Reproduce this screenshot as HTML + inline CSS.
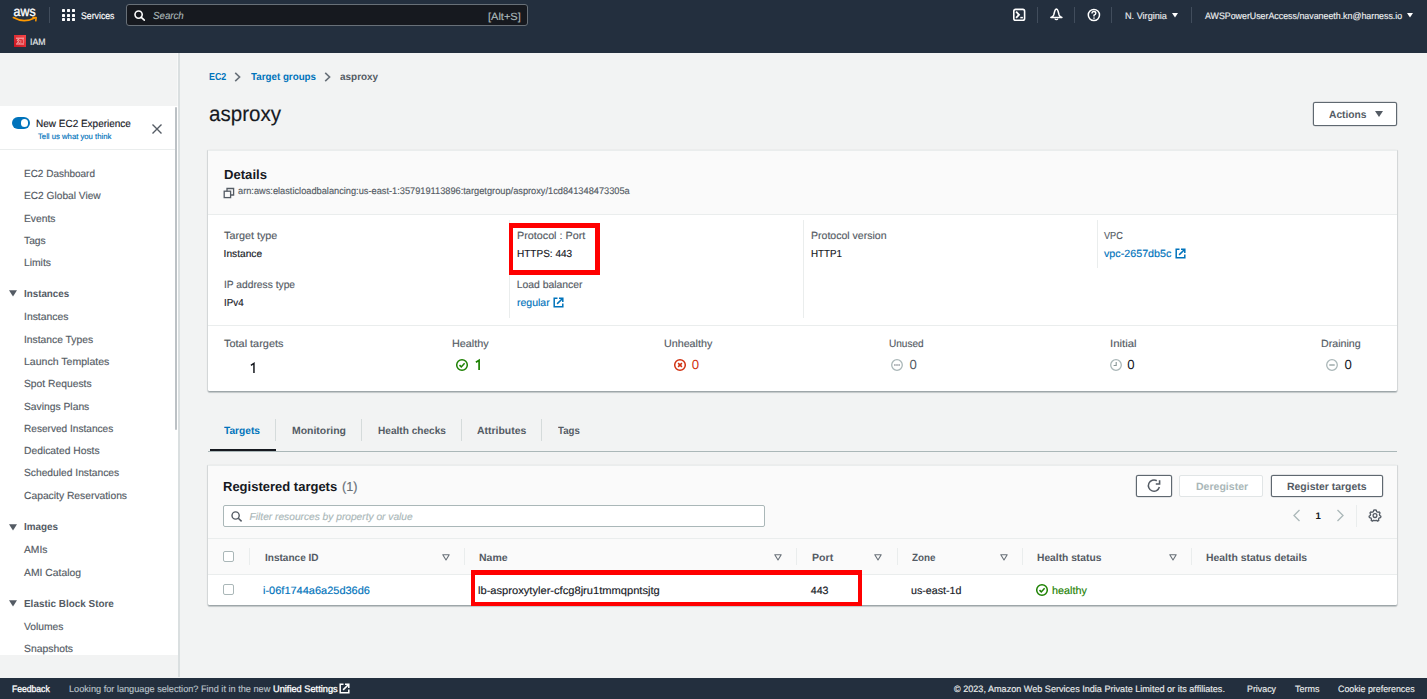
<!DOCTYPE html>
<html><head><meta charset="utf-8"><title>asproxy | EC2</title>
<style>
html,body{margin:0;padding:0;}
body{width:1427px;height:699px;position:relative;overflow:hidden;background:#f2f3f3;font-family:"Liberation Sans",sans-serif;text-rendering:geometricPrecision;}
.r{position:absolute;}
.t{position:absolute;line-height:1;white-space:nowrap;transform-origin:0 0;}
svg.r{overflow:visible;}
</style></head><body>
<div class="r" style="left:0px;top:0px;width:1427px;height:53px;background:#232f3e;"></div>
<svg class="r" style="left:12px;top:7px" width="27" height="17" viewBox="0 0 27 17">
<text x="1.6" y="8.8" font-family="Liberation Sans" font-size="13.6" fill="#fff" stroke="#fff" stroke-width="0.35" textLength="22" lengthAdjust="spacingAndGlyphs">aws</text>
<path d="M1.4 10.6 Q11.7 16.4 22.6 10.9" stroke="#ff9900" stroke-width="1.7" fill="none" stroke-linecap="round"/>
<path d="M21 10.5 L24.2 10.4 L23.8 13.8" stroke="#ff9900" stroke-width="1.5" fill="none" stroke-linecap="round" stroke-linejoin="round"/>
</svg>
<div class="r" style="left:49px;top:7px;width:1px;height:16px;background:#414d5c;"></div>
<div class="r" style="left:61.8px;top:8.8px;width:3.200000000000003px;height:3.0px;background:#fff;border-radius:0.4px;"></div>
<div class="r" style="left:66.7px;top:8.8px;width:3.200000000000003px;height:3.0px;background:#fff;border-radius:0.4px;"></div>
<div class="r" style="left:71.6px;top:8.8px;width:3.200000000000003px;height:3.0px;background:#fff;border-radius:0.4px;"></div>
<div class="r" style="left:61.8px;top:13.5px;width:3.200000000000003px;height:3.0px;background:#fff;border-radius:0.4px;"></div>
<div class="r" style="left:66.7px;top:13.5px;width:3.200000000000003px;height:3.0px;background:#fff;border-radius:0.4px;"></div>
<div class="r" style="left:71.6px;top:13.5px;width:3.200000000000003px;height:3.0px;background:#fff;border-radius:0.4px;"></div>
<div class="r" style="left:61.8px;top:18.200000000000003px;width:3.200000000000003px;height:3.0px;background:#fff;border-radius:0.4px;"></div>
<div class="r" style="left:66.7px;top:18.200000000000003px;width:3.200000000000003px;height:3.0px;background:#fff;border-radius:0.4px;"></div>
<div class="r" style="left:71.6px;top:18.200000000000003px;width:3.200000000000003px;height:3.0px;background:#fff;border-radius:0.4px;"></div>
<span class="t" style="left:80.50px;top:12px;font-size:9.6px;color:#fff;-webkit-text-stroke:0.15px #fff;transform:scaleX(0.9100);">Services</span>
<div class="r" style="left:126px;top:4px;width:402px;height:22px;background:#16191f;border:1px solid #687078;border-radius:3px;box-sizing:border-box;"></div>
<svg class="r" style="left:134px;top:10px" width="12" height="11" viewBox="0 0 12 11">
<circle cx="4.6" cy="4.6" r="3.6" stroke="#fff" stroke-width="1.6" fill="none"/><path d="M7.3 7.3 L10.3 10.2" stroke="#fff" stroke-width="1.6" stroke-linecap="round"/></svg>
<span class="t" style="left:153.00px;top:12px;font-size:10.2px;color:#aab7b8;-webkit-text-stroke:0.15px #aab7b8;font-style:italic;transform:scaleX(0.9530);">Search</span>
<span class="t" style="left:487.50px;top:13px;font-size:10.4px;color:#aab7b8;-webkit-text-stroke:0.15px #aab7b8;transform:scaleX(1.0606);">[Alt+S]</span>
<svg class="r" style="left:1012px;top:8px" width="14" height="14" viewBox="0 0 14 14">
<rect x="1.8" y="1.4" width="10.8" height="10.9" rx="1.8" stroke="#fff" stroke-width="1.6" fill="none"/>
<path d="M4.1 3.7 L7 6.8 L4.1 9.8" stroke="#fff" stroke-width="1.8" fill="none"/><path d="M8.3 9.6 H10.9" stroke="#fff" stroke-width="1.5"/></svg>
<div class="r" style="left:1037px;top:7px;width:1px;height:16px;background:#414d5c;"></div>
<svg class="r" style="left:1050px;top:8px" width="14" height="14" viewBox="0 0 14 14">
<path d="M6.4 1.1 Q5.3 1.2 4.7 3.3 L3.7 7 Q3.1 8.7 0.9 9.5 H11.9 Q9.7 8.7 9.1 7 L8.1 3.3 Q7.5 1.2 6.4 1.1 Z" stroke="#fff" stroke-width="1.5" fill="none" stroke-linejoin="round"/>
<path d="M5 10.6 A1.45 1.45 0 0 0 7.8 10.6" stroke="#fff" stroke-width="1.4" fill="none"/></svg>
<div class="r" style="left:1074px;top:7px;width:1px;height:16px;background:#414d5c;"></div>
<svg class="r" style="left:1087px;top:8px" width="14" height="14" viewBox="0 0 14 14">
<circle cx="6.9" cy="7" r="5.6" stroke="#fff" stroke-width="1.5" fill="none"/>
<path d="M5 5.4 Q5 3.5 6.9 3.5 Q8.8 3.5 8.8 5.2 Q8.8 6.4 7 7.2 V8.4" stroke="#fff" stroke-width="1.4" fill="none"/><rect x="6.3" y="9.4" width="1.4" height="1.4" fill="#fff"/></svg>
<div class="r" style="left:1111px;top:7px;width:1px;height:16px;background:#414d5c;"></div>
<span class="t" style="left:1124.70px;top:11px;font-size:9.4px;color:#e9ebed;-webkit-text-stroke:0.15px #e9ebed;transform:scaleX(0.9724);">N. Virginia</span>
<svg class="r" style="left:1172px;top:13px" width="6" height="5" viewBox="0 0 6 5"><path d="M0 0 H6 L3 4.6 Z" fill="#fff"/></svg>
<div class="r" style="left:1191px;top:7px;width:1px;height:16px;background:#414d5c;"></div>
<span class="t" style="left:1204.60px;top:11px;font-size:9.4px;color:#eef0f1;-webkit-text-stroke:0.15px #eef0f1;transform:scaleX(0.9422);">AWSPowerUserAccess/navaneeth.kn@harness.io</span>
<svg class="r" style="left:1407px;top:13px" width="6" height="5" viewBox="0 0 6 5"><path d="M0 0 H6 L3 4.6 Z" fill="#fff"/></svg>
<svg class="r" style="left:14px;top:35px" width="12" height="12" viewBox="0 0 12 12">
<defs><linearGradient id="ig" x1="0" y1="1" x2="1" y2="0"><stop offset="0" stop-color="#c7131f"/><stop offset="1" stop-color="#f54749"/></linearGradient></defs>
<rect width="12" height="12" fill="url(#ig)"/>
<path d="M2 3.2 H10 M2 9 H10" stroke="#f7c9c9" stroke-width="0.9"/>
<circle cx="4.3" cy="5.4" r="0.9" stroke="#fbe3e3" stroke-width="0.7" fill="none"/><path d="M2.9 8.2 Q4.3 6.2 5.7 8.2" stroke="#fbe3e3" stroke-width="0.7" fill="none"/>
<path d="M6.8 5 V8 M8.4 4.6 H9.6 V8" stroke="#f3b5b5" stroke-width="0.6" fill="none"/></svg>
<span class="t" style="left:29.50px;top:38px;font-size:9.2px;color:#e6e9ec;-webkit-text-stroke:0.15px #e6e9ec;transform:scaleX(0.9476);">IAM</span>
<div class="r" style="left:0px;top:53px;width:178px;height:624px;background:#f2f3f3;"></div>
<div class="r" style="left:177px;top:53px;width:1px;height:53px;background:#f8f8f8;"></div>
<div class="r" style="left:0px;top:106px;width:178px;height:549px;background:#ffffff;"></div>
<div class="r" style="left:175px;top:107px;width:2.3000000000000114px;height:323px;background:#bcc1c5;border-radius:1px;"></div>
<div class="r" style="left:178px;top:53px;width:2px;height:624px;background:#dadfe0;"></div>
<div class="r" style="left:12px;top:117px;width:18px;height:12px;background:#0073bb;border-radius:6px;"></div>
<div class="r" style="left:20.5px;top:119px;width:7.5px;height:7.5px;background:#fff;border-radius:50%;"></div>
<span class="t" style="left:36.00px;top:120px;font-size:10.4px;color:#16191f;-webkit-text-stroke:0.15px #16191f;transform:scaleX(0.9611);">New EC2 Experience</span>
<span class="t" style="left:38.20px;top:133px;font-size:7.8px;color:#0073bb;-webkit-text-stroke:0.15px #0073bb;transform:scaleX(0.9900);">Tell us what you think</span>
<svg class="r" style="left:151px;top:123px" width="12" height="12" viewBox="0 0 12 12"><path d="M1.5 1.5 L10.5 10.5 M10.5 1.5 L1.5 10.5" stroke="#545b64" stroke-width="1.4"/></svg>
<div class="r" style="left:0px;top:149px;width:175px;height:1px;background:#eaeded;"></div>
<span class="t" style="left:24.00px;top:170px;font-size:10.3px;color:#545b64;-webkit-text-stroke:0.15px #545b64;transform:scaleX(0.9688);">EC2 Dashboard</span>
<span class="t" style="left:24.00px;top:192px;font-size:10.3px;color:#545b64;-webkit-text-stroke:0.15px #545b64;transform:scaleX(0.9874);">EC2 Global View</span>
<span class="t" style="left:24.00px;top:215px;font-size:10.3px;color:#545b64;-webkit-text-stroke:0.15px #545b64;">Events</span>
<span class="t" style="left:24.00px;top:237px;font-size:10.3px;color:#545b64;-webkit-text-stroke:0.15px #545b64;">Tags</span>
<span class="t" style="left:24.00px;top:259px;font-size:10.3px;color:#545b64;-webkit-text-stroke:0.15px #545b64;">Limits</span>
<span class="t" style="left:24.00px;top:313px;font-size:10.3px;color:#545b64;-webkit-text-stroke:0.15px #545b64;transform:scaleX(1.0094);">Instances</span>
<span class="t" style="left:24.00px;top:336px;font-size:10.3px;color:#545b64;-webkit-text-stroke:0.15px #545b64;">Instance Types</span>
<span class="t" style="left:24.00px;top:358px;font-size:10.3px;color:#545b64;-webkit-text-stroke:0.15px #545b64;transform:scaleX(1.0238);">Launch Templates</span>
<span class="t" style="left:24.00px;top:380px;font-size:10.3px;color:#545b64;-webkit-text-stroke:0.15px #545b64;">Spot Requests</span>
<span class="t" style="left:24.00px;top:403px;font-size:10.3px;color:#545b64;-webkit-text-stroke:0.15px #545b64;">Savings Plans</span>
<span class="t" style="left:24.00px;top:425px;font-size:10.3px;color:#545b64;-webkit-text-stroke:0.15px #545b64;transform:scaleX(0.9810);">Reserved Instances</span>
<span class="t" style="left:24.00px;top:447px;font-size:10.3px;color:#545b64;-webkit-text-stroke:0.15px #545b64;">Dedicated Hosts</span>
<span class="t" style="left:24.00px;top:469px;font-size:10.3px;color:#545b64;-webkit-text-stroke:0.15px #545b64;transform:scaleX(0.9955);">Scheduled Instances</span>
<span class="t" style="left:24.00px;top:492px;font-size:10.3px;color:#545b64;-webkit-text-stroke:0.15px #545b64;">Capacity Reservations</span>
<span class="t" style="left:24.00px;top:546px;font-size:10.3px;color:#545b64;-webkit-text-stroke:0.15px #545b64;">AMIs</span>
<span class="t" style="left:24.00px;top:569px;font-size:10.3px;color:#545b64;-webkit-text-stroke:0.15px #545b64;transform:scaleX(1.0057);">AMI Catalog</span>
<span class="t" style="left:24.00px;top:623px;font-size:10.3px;color:#545b64;-webkit-text-stroke:0.15px #545b64;">Volumes</span>
<span class="t" style="left:24.00px;top:645px;font-size:10.3px;color:#545b64;-webkit-text-stroke:0.15px #545b64;transform:scaleX(1.0067);">Snapshots</span>
<svg class="r" style="left:9.4px;top:290px" width="8" height="7" viewBox="0 0 8 7"><path d="M0 0.2 H8 L4 6.6 Z" fill="#545b64"/></svg>
<span class="t" style="left:23.50px;top:290px;font-size:10.2px;color:#545b64;font-weight:700;transform:scaleX(0.9605);">Instances</span>
<svg class="r" style="left:9.4px;top:523.5px" width="8" height="7" viewBox="0 0 8 7"><path d="M0 0.2 H8 L4 6.6 Z" fill="#545b64"/></svg>
<span class="t" style="left:23.50px;top:523px;font-size:10.2px;color:#545b64;font-weight:700;transform:scaleX(0.9701);">Images</span>
<svg class="r" style="left:9.4px;top:600px" width="8" height="7" viewBox="0 0 8 7"><path d="M0 0.2 H8 L4 6.6 Z" fill="#545b64"/></svg>
<span class="t" style="left:23.50px;top:600px;font-size:10.2px;color:#545b64;font-weight:700;transform:scaleX(0.9740);">Elastic Block Store</span>
<div class="r" style="left:180px;top:53px;width:1247px;height:624px;background:#f2f3f3;"></div>
<span class="t" style="left:208.70px;top:73px;font-size:10.2px;color:#0073bb;font-weight:700;transform:scaleX(0.8718);">EC2</span>
<svg class="r" style="left:234px;top:71.6px" width="7" height="10" viewBox="0 0 7 10"><path d="M1.2 0.8 L5.6 5 L1.2 9.2" stroke="#687078" stroke-width="1.6" fill="none"/></svg>
<span class="t" style="left:250.50px;top:73px;font-size:10.2px;color:#0073bb;font-weight:700;transform:scaleX(0.9600);">Target groups</span>
<svg class="r" style="left:323.8px;top:71.6px" width="7" height="10" viewBox="0 0 7 10"><path d="M1.2 0.8 L5.6 5 L1.2 9.2" stroke="#687078" stroke-width="1.6" fill="none"/></svg>
<span class="t" style="left:339.50px;top:73px;font-size:10.2px;color:#545b64;font-weight:700;transform:scaleX(0.9764);">asproxy</span>
<span class="t" style="left:208.50px;top:104px;font-size:21.5px;color:#16191f;-webkit-text-stroke:0.15px #16191f;transform:scaleX(0.9564);">asproxy</span>
<div class="r" style="left:1313px;top:102px;width:84px;height:24px;background:#fff;border:1px solid #5f6870;border-radius:2px;box-sizing:border-box;box-shadow:0 0 0.5px 0.3px rgba(95,104,112,.6);"></div>
<span class="t" style="left:1329.00px;top:110px;font-size:10.5px;color:#545b64;font-weight:700;transform:scaleX(0.9739);">Actions</span>
<svg class="r" style="left:1375px;top:111px" width="8" height="6" viewBox="0 0 8 6"><path d="M0 0 H8 L4 6 Z" fill="#545b64"/></svg>
<div class="r" style="left:208px;top:150px;width:1189px;height:241px;background:#fff;box-shadow:0 1.5px 1px 0 rgba(0,28,36,.18),1px 0.5px 1px 0 rgba(0,28,36,.12),-1px 0.5px 1px 0 rgba(0,28,36,.12);border-top:1px solid #eaeded;box-sizing:border-box;border-radius:0 0 1.5px 1.5px;"></div>
<div class="r" style="left:208px;top:151px;width:1189px;height:63px;background:#fafafa;"></div>
<div class="r" style="left:208px;top:214px;width:1189px;height:1px;background:#eaeded;"></div>
<span class="t" style="left:223.60px;top:168px;font-size:13.2px;color:#16191f;font-weight:700;transform:scaleX(0.9934);">Details</span>
<svg class="r" style="left:223px;top:187px" width="12" height="12" viewBox="0 0 12 12">
<rect x="1.2" y="4.2" width="6.4" height="6.4" stroke="#545b64" stroke-width="1.3" fill="none"/>
<path d="M4 4.2 V1.5 H10.6 V8 H7.6" stroke="#545b64" stroke-width="1.3" fill="none"/></svg>
<span class="t" style="left:237.50px;top:187px;font-size:9.6px;color:#545b64;-webkit-text-stroke:0.15px #545b64;transform:scaleX(0.9630);">arn:aws:elasticloadbalancing:us-east-1:357919113896:targetgroup/asproxy/1cd841348473305a</span>
<div class="r" style="left:509px;top:219.5px;width:1px;height:98.5px;background:#eaeded;"></div>
<div class="r" style="left:802.5px;top:219.5px;width:1.0px;height:98.5px;background:#eaeded;"></div>
<div class="r" style="left:1096.5px;top:219.5px;width:1.0px;height:48.80000000000001px;background:#eaeded;"></div>
<span class="t" style="left:223.60px;top:232px;font-size:10.4px;color:#545b64;-webkit-text-stroke:0.15px #545b64;transform:scaleX(1.0379);">Target type</span>
<span class="t" style="left:223.60px;top:250px;font-size:10.2px;color:#16191f;-webkit-text-stroke:0.15px #16191f;">Instance</span>
<span class="t" style="left:223.60px;top:281px;font-size:10.4px;color:#545b64;-webkit-text-stroke:0.15px #545b64;transform:scaleX(0.9865);">IP address type</span>
<span class="t" style="left:223.60px;top:299px;font-size:10.2px;color:#16191f;-webkit-text-stroke:0.15px #16191f;transform:scaleX(0.9603);">IPv4</span>
<span class="t" style="left:516.70px;top:232px;font-size:10.4px;color:#545b64;-webkit-text-stroke:0.15px #545b64;transform:scaleX(1.0365);">Protocol : Port</span>
<span class="t" style="left:516.70px;top:250px;font-size:10.2px;color:#16191f;-webkit-text-stroke:0.15px #16191f;transform:scaleX(0.9836);">HTTPS: 443</span>
<span class="t" style="left:516.70px;top:281px;font-size:10.4px;color:#545b64;-webkit-text-stroke:0.15px #545b64;">Load balancer</span>
<span class="t" style="left:516.70px;top:299px;font-size:10.4px;color:#0073bb;-webkit-text-stroke:0.15px #0073bb;transform:scaleX(1.0100);">regular</span>
<svg class="r" style="left:553.4px;top:297.3px" width="11" height="11" viewBox="0 0 11 11">
<path d="M4.5 1.2 H1.2 V9.8 H9.8 V6.5" stroke="#0073bb" stroke-width="1.5" fill="none"/><path d="M6 1.2 H9.8 V5 M9.8 1.2 L4.1 6.9" stroke="#0073bb" stroke-width="1.5" fill="none"/></svg>
<span class="t" style="left:810.60px;top:232px;font-size:10.4px;color:#545b64;-webkit-text-stroke:0.15px #545b64;transform:scaleX(1.0138);">Protocol version</span>
<span class="t" style="left:810.60px;top:250px;font-size:10.2px;color:#16191f;-webkit-text-stroke:0.15px #16191f;transform:scaleX(0.9596);">HTTP1</span>
<span class="t" style="left:1104.00px;top:232px;font-size:10.2px;color:#545b64;-webkit-text-stroke:0.15px #545b64;transform:scaleX(0.8964);">VPC</span>
<span class="t" style="left:1104.00px;top:250px;font-size:10.4px;color:#0073bb;-webkit-text-stroke:0.15px #0073bb;transform:scaleX(1.0316);">vpc-2657db5c</span>
<svg class="r" style="left:1175.4px;top:247.6px" width="11" height="11" viewBox="0 0 11 11">
<path d="M4.5 1.2 H1.2 V9.8 H9.8 V6.5" stroke="#0073bb" stroke-width="1.5" fill="none"/><path d="M6 1.2 H9.8 V5 M9.8 1.2 L4.1 6.9" stroke="#0073bb" stroke-width="1.5" fill="none"/></svg>
<div class="r" style="left:509px;top:223px;width:91px;height:52px;border:5px solid #f00;border-left-width:4px;box-sizing:border-box;"></div>
<div class="r" style="left:208px;top:325px;width:1189px;height:1px;background:#eaeded;"></div>
<span class="t" style="left:223.50px;top:340px;font-size:10.4px;color:#545b64;-webkit-text-stroke:0.15px #545b64;transform:scaleX(1.0503);">Total targets</span>
<span class="t" style="left:452.30px;top:340px;font-size:10.4px;color:#545b64;-webkit-text-stroke:0.15px #545b64;transform:scaleX(1.0407);">Healthy</span>
<span class="t" style="left:664.20px;top:340px;font-size:10.4px;color:#545b64;-webkit-text-stroke:0.15px #545b64;transform:scaleX(1.0314);">Unhealthy</span>
<span class="t" style="left:888.70px;top:340px;font-size:10.4px;color:#545b64;-webkit-text-stroke:0.15px #545b64;transform:scaleX(0.9680);">Unused</span>
<span class="t" style="left:1110.20px;top:340px;font-size:10.4px;color:#545b64;-webkit-text-stroke:0.15px #545b64;transform:scaleX(1.0915);">Initial</span>
<span class="t" style="left:1321.40px;top:340px;font-size:10.4px;color:#545b64;-webkit-text-stroke:0.15px #545b64;transform:scaleX(1.0250);">Draining</span>
<svg class="r" style="left:0;top:0" width="1" height="1"><path d="M250.9 365.3 L253.95 363.3 V372.9" stroke="#16191f" stroke-width="1.5" fill="none"/></svg>
<svg class="r" style="left:456px;top:359.2px" width="12" height="12" viewBox="0 0 12 12"><circle cx="6" cy="6" r="5.3" stroke="#1d8102" stroke-width="1.5" fill="none"/><path d="M3.5 6.1 L5.3 7.9 L8.6 4.3" stroke="#1d8102" stroke-width="1.5" fill="none"/></svg>
<svg class="r" style="left:0;top:0" width="1" height="1"><path d="M475.9 362.3 L479.1 360.3 V369.9" stroke="#1d8102" stroke-width="1.7" fill="none"/></svg>
<svg class="r" style="left:673.6px;top:359.2px" width="12" height="12" viewBox="0 0 12 12"><circle cx="6" cy="6" r="5.3" stroke="#d13212" stroke-width="1.5" fill="none"/><path d="M4.1 4.1 L7.9 7.9 M7.9 4.1 L4.1 7.9" stroke="#d13212" stroke-width="1.5"/></svg>
<span class="t" style="left:691.80px;top:358px;font-size:13.2px;color:#d13212;">0</span>
<svg class="r" style="left:891.2px;top:358.7px" width="12" height="12" viewBox="0 0 12 12"><circle cx="6" cy="6" r="5.3" stroke="#aab7b8" stroke-width="1.3" fill="none"/><rect x="3.3" y="5.4" width="1.2" height="1.2" fill="#545b64"/><rect x="5.4" y="5.4" width="1.2" height="1.2" fill="#545b64"/><rect x="7.5" y="5.4" width="1.2" height="1.2" fill="#545b64"/></svg>
<span class="t" style="left:909.60px;top:358px;font-size:13.2px;color:#545b64;">0</span>
<svg class="r" style="left:1109.6px;top:358.7px" width="12" height="12" viewBox="0 0 12 12"><circle cx="6" cy="6" r="5.3" stroke="#aab7b8" stroke-width="1.3" fill="none"/><path d="M6.2 3.0 V6.5 H3.6" stroke="#879596" stroke-width="1.1" fill="none"/></svg>
<span class="t" style="left:1127.20px;top:358px;font-size:13.2px;color:#16191f;">0</span>
<svg class="r" style="left:1326.4px;top:358.7px" width="12" height="12" viewBox="0 0 12 12"><circle cx="6" cy="6" r="5.3" stroke="#aab7b8" stroke-width="1.3" fill="none"/><path d="M3.3 6 H8.7" stroke="#879596" stroke-width="1.2"/></svg>
<span class="t" style="left:1344.60px;top:358px;font-size:13.2px;color:#16191f;">0</span>
<span class="t" style="left:224.10px;top:427px;font-size:10.4px;color:#0073bb;font-weight:700;transform:scaleX(0.9783);">Targets</span>
<span class="t" style="left:291.80px;top:427px;font-size:10.4px;color:#545b64;font-weight:700;transform:scaleX(1.0053);">Monitoring</span>
<span class="t" style="left:377.70px;top:427px;font-size:10.4px;color:#545b64;font-weight:700;transform:scaleX(0.9721);">Health checks</span>
<span class="t" style="left:477.10px;top:427px;font-size:10.4px;color:#545b64;font-weight:700;transform:scaleX(1.0038);">Attributes</span>
<span class="t" style="left:558.00px;top:427px;font-size:10.4px;color:#545b64;font-weight:700;transform:scaleX(0.9276);">Tags</span>
<div class="r" style="left:275.2px;top:419px;width:1.0px;height:22px;background:#d5dbdb;"></div>
<div class="r" style="left:360.7px;top:419px;width:1.0px;height:22px;background:#d5dbdb;"></div>
<div class="r" style="left:460.5px;top:419px;width:1.0px;height:22px;background:#d5dbdb;"></div>
<div class="r" style="left:541.4px;top:419px;width:1.0px;height:22px;background:#d5dbdb;"></div>
<div class="r" style="left:208px;top:451px;width:1189px;height:1px;background:#aab7b8;"></div>
<div class="r" style="left:210px;top:449.2px;width:65.5px;height:2.1999999999999886px;background:#16191f;"></div>
<div class="r" style="left:208px;top:464.5px;width:1189px;height:140.5px;background:#fff;box-shadow:0 1.5px 1px 0 rgba(0,28,36,.18),1px 0.5px 1px 0 rgba(0,28,36,.12),-1px 0.5px 1px 0 rgba(0,28,36,.12);border-top:1px solid #eaeded;box-sizing:border-box;border-radius:0 0 1.5px 1.5px;"></div>
<div class="r" style="left:208px;top:465.5px;width:1189px;height:109.0px;background:#fafafa;"></div>
<div class="r" style="left:208px;top:538px;width:1189px;height:1px;background:#eaeded;"></div>
<div class="r" style="left:208px;top:574px;width:1189px;height:1px;background:#eaeded;"></div>
<span class="t" style="left:223.40px;top:480px;font-size:13.2px;color:#16191f;font-weight:700;transform:scaleX(0.9861);">Registered targets</span>
<span class="t" style="left:341.80px;top:480px;font-size:13px;color:#687078;-webkit-text-stroke:0.15px #687078;transform:scaleX(0.9755);">(1)</span>
<div class="r" style="left:223px;top:504.5px;width:542px;height:22.5px;background:#fff;border:1px solid #aab7b8;border-radius:2px;box-sizing:border-box;"></div>
<svg class="r" style="left:231px;top:510.5px" width="12" height="11" viewBox="0 0 12 11">
<circle cx="4.6" cy="4.5" r="3.6" stroke="#545b64" stroke-width="1.4" fill="none"/><path d="M7.3 7.2 L10.6 10.4" stroke="#545b64" stroke-width="1.5"/></svg>
<span class="t" style="left:249.60px;top:513px;font-size:10.2px;color:#aab7b8;-webkit-text-stroke:0.15px #aab7b8;font-style:italic;">Filter resources by property or value</span>
<div class="r" style="left:1136px;top:474.8px;width:36px;height:22.0px;background:#fff;border:1px solid #5f6870;border-radius:2px;box-sizing:border-box;box-shadow:0 0 0.5px 0.3px rgba(95,104,112,.6);"></div>
<svg class="r" style="left:1146px;top:478px" width="16" height="16" viewBox="0 0 16 16">
<path d="M13.4 9.05 A5.6 5.6 0 1 1 10.8 2.75" stroke="#545b64" stroke-width="1.5" fill="none"/><path d="M13.6 2.2 V6 H9.8" stroke="#545b64" stroke-width="1.6" fill="none"/></svg>
<div class="r" style="left:1179.3px;top:474.8px;width:83.90000000000009px;height:22.0px;background:#fff;border:1px solid #e1e5e6;border-radius:2px;box-sizing:border-box;"></div>
<span class="t" style="left:1195.50px;top:482px;font-size:10.5px;color:#aab7b8;font-weight:700;transform:scaleX(1.0030);">Deregister</span>
<div class="r" style="left:1270.7px;top:474.8px;width:111.89999999999986px;height:22.0px;background:#fff;border:1px solid #5f6870;border-radius:2px;box-sizing:border-box;box-shadow:0 0 0.5px 0.3px rgba(95,104,112,.6);"></div>
<span class="t" style="left:1286.80px;top:482px;font-size:10.5px;color:#545b64;font-weight:700;transform:scaleX(0.9944);">Register targets</span>
<svg class="r" style="left:1292px;top:508.7px" width="9" height="13" viewBox="0 0 9 13"><path d="M7.5 1 L2 6.5 L7.5 12" stroke="#aab7b8" stroke-width="1.3" fill="none"/></svg>
<span class="t" style="left:1315.60px;top:512px;font-size:9.6px;color:#16191f;font-weight:700;">1</span>
<svg class="r" style="left:1336.4px;top:508.7px" width="9" height="13" viewBox="0 0 9 13"><path d="M1.5 1 L7 6.5 L1.5 12" stroke="#aab7b8" stroke-width="1.3" fill="none"/></svg>
<div class="r" style="left:1356px;top:505px;width:1px;height:22px;background:#eaeded;"></div>
<svg class="r" style="left:1368px;top:508.6px" width="14" height="13" viewBox="0 0 14 13">
<path d="M7 0.9 L8.3 1.2 L8.6 2.6 L9.9 3.3 L11.2 2.8 L12 3.9 L11.4 5.2 L11.8 6.5 L12.9 7.3 L12.6 8.6 L11.2 8.9 L10.5 10.1 L10.8 11.4 L9.6 12.1 L8.5 11.3 L7 11.7 L5.5 11.3 L4.4 12.1 L3.2 11.4 L3.5 10.1 L2.8 8.9 L1.4 8.6 L1.1 7.3 L2.2 6.5 L2.6 5.2 L2 3.9 L2.8 2.8 L4.1 3.3 L5.4 2.6 L5.7 1.2 Z" stroke="#545b64" stroke-width="1.3" fill="none" stroke-linejoin="round"/>
<circle cx="7" cy="6.6" r="1.9" stroke="#545b64" stroke-width="1.3" fill="none"/></svg>
<div class="r" style="left:222.9px;top:550.8px;width:11.0px;height:11.0px;background:#fff;border:1px solid #aab7b8;border-radius:2px;box-sizing:border-box;"></div>
<div class="r" style="left:222.9px;top:584.2px;width:11.0px;height:11.0px;background:#fff;border:1px solid #aab7b8;border-radius:2px;box-sizing:border-box;"></div>
<div class="r" style="left:248.7px;top:547.6px;width:1.0px;height:17.899999999999977px;background:#eaeded;"></div>
<div class="r" style="left:463.6px;top:547.6px;width:1.0px;height:17.899999999999977px;background:#eaeded;"></div>
<div class="r" style="left:796.4px;top:547.6px;width:1.0px;height:17.899999999999977px;background:#eaeded;"></div>
<div class="r" style="left:896.6px;top:547.6px;width:1.0px;height:17.899999999999977px;background:#eaeded;"></div>
<div class="r" style="left:1021.5px;top:547.6px;width:1.0px;height:17.899999999999977px;background:#eaeded;"></div>
<div class="r" style="left:1190.5px;top:547.6px;width:1.0px;height:17.899999999999977px;background:#eaeded;"></div>
<span class="t" style="left:264.50px;top:554px;font-size:10.4px;color:#545b64;font-weight:700;transform:scaleX(0.9660);">Instance ID</span>
<span class="t" style="left:479.30px;top:554px;font-size:10.4px;color:#545b64;font-weight:700;transform:scaleX(1.0097);">Name</span>
<span class="t" style="left:811.70px;top:554px;font-size:10.4px;color:#545b64;font-weight:700;transform:scaleX(1.0192);">Port</span>
<span class="t" style="left:911.70px;top:554px;font-size:10.4px;color:#545b64;font-weight:700;transform:scaleX(0.9459);">Zone</span>
<span class="t" style="left:1037.30px;top:554px;font-size:10.4px;color:#545b64;font-weight:700;transform:scaleX(0.9861);">Health status</span>
<span class="t" style="left:1206.00px;top:554px;font-size:10.4px;color:#545b64;font-weight:700;">Health status details</span>
<svg class="r" style="left:442.1px;top:553.5px" width="8" height="7" viewBox="0 0 8 7"><path d="M0.8 0.8 H7.2 L4 6 Z" stroke="#687078" stroke-width="1.1" fill="none" stroke-linejoin="round"/></svg>
<svg class="r" style="left:774.3px;top:553.5px" width="8" height="7" viewBox="0 0 8 7"><path d="M0.8 0.8 H7.2 L4 6 Z" stroke="#687078" stroke-width="1.1" fill="none" stroke-linejoin="round"/></svg>
<svg class="r" style="left:873.9px;top:553.5px" width="8" height="7" viewBox="0 0 8 7"><path d="M0.8 0.8 H7.2 L4 6 Z" stroke="#687078" stroke-width="1.1" fill="none" stroke-linejoin="round"/></svg>
<svg class="r" style="left:1000px;top:553.5px" width="8" height="7" viewBox="0 0 8 7"><path d="M0.8 0.8 H7.2 L4 6 Z" stroke="#687078" stroke-width="1.1" fill="none" stroke-linejoin="round"/></svg>
<svg class="r" style="left:1169px;top:553.5px" width="8" height="7" viewBox="0 0 8 7"><path d="M0.8 0.8 H7.2 L4 6 Z" stroke="#687078" stroke-width="1.1" fill="none" stroke-linejoin="round"/></svg>
<span class="t" style="left:263.40px;top:586px;font-size:10.6px;color:#0073bb;-webkit-text-stroke:0.15px #0073bb;transform:scaleX(1.0373);">i-06f1744a6a25d36d6</span>
<span class="t" style="left:478.20px;top:586px;font-size:10.6px;color:#16191f;-webkit-text-stroke:0.15px #16191f;transform:scaleX(1.0502);">lb-asproxytyler-cfcg8jru1tmmqpntsjtg</span>
<span class="t" style="left:810.80px;top:586px;font-size:10.6px;color:#16191f;-webkit-text-stroke:0.15px #16191f;">443</span>
<span class="t" style="left:910.50px;top:586px;font-size:10.6px;color:#16191f;-webkit-text-stroke:0.15px #16191f;transform:scaleX(1.0083);">us-east-1d</span>
<svg class="r" style="left:1036px;top:584px" width="12" height="12" viewBox="0 0 12 12"><circle cx="6" cy="6" r="5.3" stroke="#1d8102" stroke-width="1.5" fill="none"/><path d="M3.5 6.1 L5.3 7.9 L8.6 4.3" stroke="#1d8102" stroke-width="1.5" fill="none"/></svg>
<span class="t" style="left:1052.20px;top:586px;font-size:10.6px;color:#1d8102;-webkit-text-stroke:0.15px #1d8102;transform:scaleX(1.0181);">healthy</span>
<div class="r" style="left:471px;top:570px;width:391px;height:36px;border:4px solid #f00;border-top-width:5px;box-sizing:border-box;"></div>
<div class="r" style="left:0px;top:677.5px;width:1427px;height:21.5px;background:#232f3e;"></div>
<span class="t" style="left:11.90px;top:684px;font-size:9.4px;color:#fff;-webkit-text-stroke:0.3px #fff;transform:scaleX(0.9156);">Feedback</span>
<span class="t" style="left:68.60px;top:684px;font-size:9.4px;color:#b9c1c7;-webkit-text-stroke:0.15px #b9c1c7;transform:scaleX(0.9776);">Looking for language selection? Find it in the new</span>
<span class="t" style="left:272.50px;top:684px;font-size:9.4px;color:#fff;-webkit-text-stroke:0.3px #fff;transform:scaleX(0.9842);">Unified Settings</span>
<svg class="r" style="left:338.8px;top:682.6px" width="11" height="11" viewBox="0 0 11 11">
<path d="M4.5 1.2 H1.2 V9.8 H9.8 V6.5" stroke="#fff" stroke-width="1.5" fill="none"/><path d="M6 1.2 H9.8 V5 M9.8 1.2 L4.1 6.9" stroke="#fff" stroke-width="1.5" fill="none"/></svg>
<span class="t" style="left:953.70px;top:685px;font-size:9.2px;color:#eaeded;-webkit-text-stroke:0.15px #eaeded;transform:scaleX(0.9887);">© 2023, Amazon Web Services India Private Limited or its affiliates.</span>
<span class="t" style="left:1247.20px;top:685px;font-size:9.2px;color:#eaeded;-webkit-text-stroke:0.15px #eaeded;transform:scaleX(0.9615);">Privacy</span>
<span class="t" style="left:1295.00px;top:685px;font-size:9.2px;color:#eaeded;-webkit-text-stroke:0.15px #eaeded;transform:scaleX(0.9782);">Terms</span>
<span class="t" style="left:1338.30px;top:685px;font-size:9.2px;color:#eaeded;-webkit-text-stroke:0.15px #eaeded;transform:scaleX(0.9614);">Cookie preferences</span>
</body></html>
